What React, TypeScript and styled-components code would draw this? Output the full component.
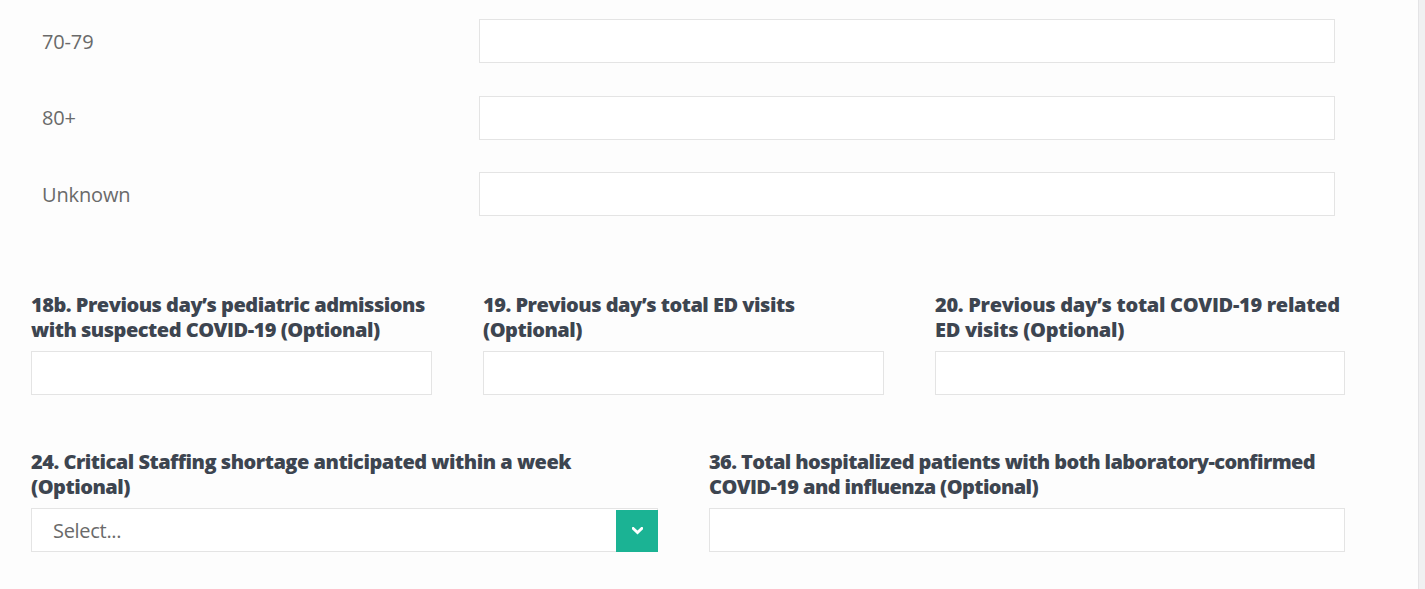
import React from "react";
import styled, { createGlobalStyle } from "styled-components";

const Global = createGlobalStyle`
  html, body { margin: 0; padding: 0; background: #fdfdfd; }
  body { font-family: "Open Sans", "Noto Sans", sans-serif; }
  * { box-sizing: border-box; }
`;

const Shell = styled.div`
  display: flex;
  width: 1425px;
  height: 589px;
  overflow: hidden;
`;

const Main = styled.div`
  flex: 1;
  padding-top: 19px;
`;

const Track = styled.div`
  width: 7px;
  background: #f0f0f1;
  border-left: 1px solid #e4e4e6;
`;

const AgeGrid = styled.div`
  display: grid;
  grid-template-columns: 437px 856px;
  row-gap: 32.5px;
  padding-left: 42px;
`;

const AgeLabel = styled.div`
  font-size: 20px;
  color: #6a6a6a;
  display: flex;
  align-items: center;
  height: 44px;
  letter-spacing: -0.15px;
`;

const TextBox = styled.div`
  height: 44px;
  background: #fff;
  border: 1px solid #e4e4e4;
`;

const FieldGrid = styled.div<{ $cols: string; $top: number }>`
  display: grid;
  grid-template-columns: ${(p) => p.$cols};
  column-gap: 51px;
  padding-left: 31px;
  margin-top: ${(p) => p.$top}px;
  width: 1345px;
`;

const Field = styled.div`
  display: flex;
  flex-direction: column;
`;

const Label = styled.div<{ $spacing?: number }>`
  font-size: 20px;
  font-weight: 800;
  line-height: 25px;
  color: #3d4550;
  letter-spacing: ${(p) => (p.$spacing ?? -0.5)}px;
  margin-bottom: 9px;
`;

const SelectBox = styled.div`
  position: relative;
  height: 44px;
  background: #fff;
  border: 1px solid #e4e4e4;
  display: flex;
  align-items: center;
  padding-left: 21px;
  font-size: 20px;
  color: #6a6a6a;
  letter-spacing: -0.3px;
`;

const Toggle = styled.div`
  position: absolute;
  right: -1px;
  top: 1px;
  width: 42px;
  height: 42px;
  background: #1bb394;
  display: flex;
  align-items: center;
  justify-content: center;
`;

const Chevron = () => (
  <svg width="11" height="8" viewBox="0 0 11 8">
    <path d="M1.2 1.4 L5.5 5.6 L9.8 1.4" fill="none" stroke="#fff" strokeWidth="2.8" strokeLinecap="square" />
  </svg>
);

export default function App() {
  return (
    <>
      <Global />
      <Shell>
        <Main>
          <AgeGrid>
            <AgeLabel>70-79</AgeLabel>
            <TextBox />
            <AgeLabel>80+</AgeLabel>
            <TextBox />
            <AgeLabel>Unknown</AgeLabel>
            <TextBox />
          </AgeGrid>
          <FieldGrid $cols="401px 401px 410px" $top={76}>
            <Field>
              <Label>18b. Previous day’s pediatric admissions with suspected COVID-19 (Optional)</Label>
              <TextBox />
            </Field>
            <Field>
              <Label>19. Previous day’s total ED visits (Optional)</Label>
              <TextBox />
            </Field>
            <Field>
              <Label $spacing={-0.3}>20. Previous day’s total COVID-19 related ED visits (Optional)</Label>
              <TextBox />
            </Field>
          </FieldGrid>
          <FieldGrid $cols="627px 636px" $top={54}>
            <Field>
              <Label>24. Critical Staffing shortage anticipated within a week (Optional)</Label>
              <SelectBox>
                Select...
                <Toggle>
                  <Chevron />
                </Toggle>
              </SelectBox>
            </Field>
            <Field>
              <Label $spacing={-0.6}>36. Total hospitalized patients with both laboratory-confirmed COVID-19 and influenza (Optional)</Label>
              <TextBox />
            </Field>
          </FieldGrid>
        </Main>
        <Track />
      </Shell>
    </>
  );
}
